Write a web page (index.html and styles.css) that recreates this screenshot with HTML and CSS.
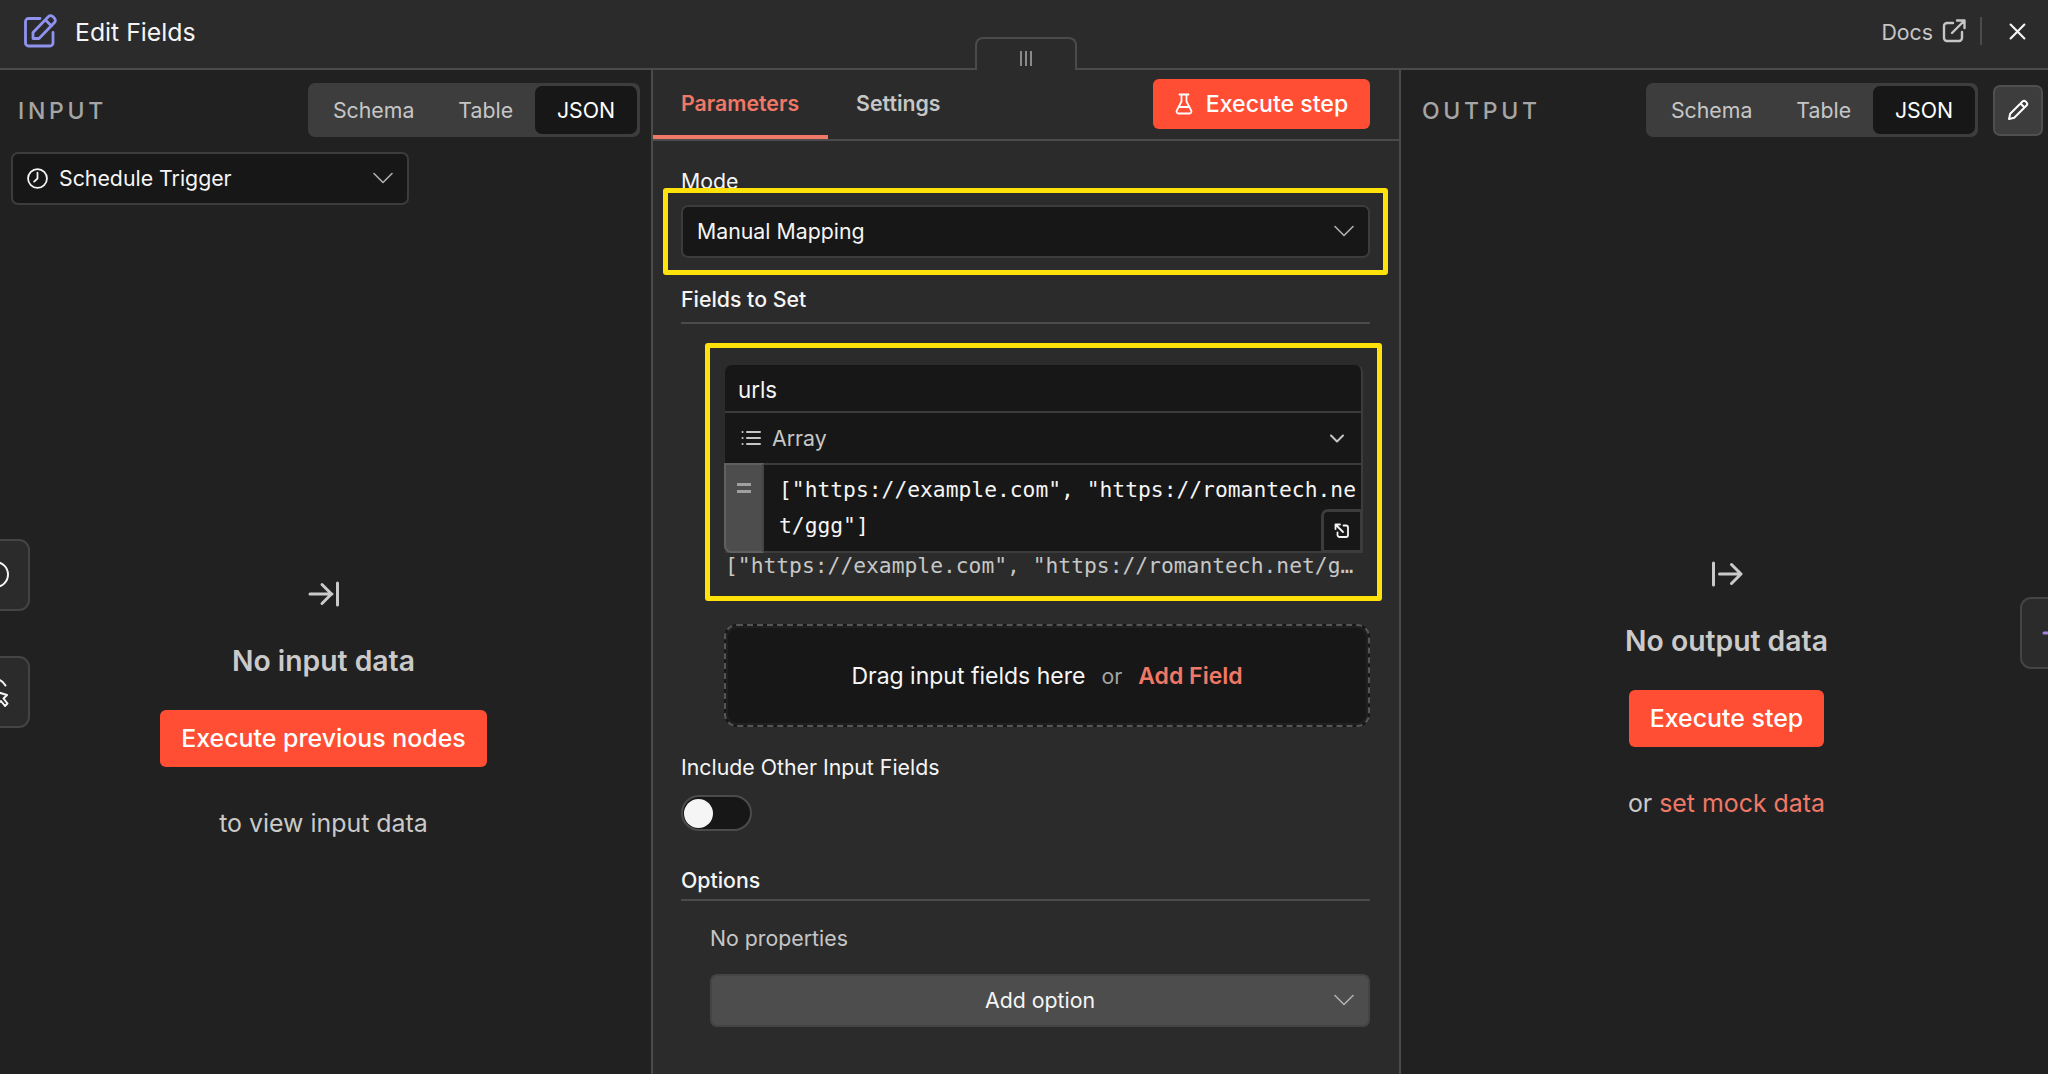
FILE: index.html
```
<!DOCTYPE html>
<html lang="en">
<head>
    <meta charset="UTF-8">
    <meta name="viewport" content="width=device-width, initial-scale=1.0">
    <title>Edit Fields</title>
    <link rel="stylesheet" href="styles.css">
</head>
<body>
    <header class="header">
        <svg class="node-icon" viewBox="0 0 34 34"><path d="M16 4.500H4.500a3 3 0 0 0-3 3V29a3 3 0 0 0 3 3H26a3 3 0 0 0 3-3V18.500"/><path d="M9 24.500v-6L24.500 2.500a3 3 0 0 1 4.200 0l1.800 1.800a3 3 0 0 1 0 4.200L15 24.500zM21.500 6l6 6"/></svg>
        <h1>Edit Fields</h1>
        <a class="docs">Docs
            <svg viewBox="0 0 24 24"><path d="M11 4H5a3 3 0 0 0-3 3v12a3 3 0 0 0 3 3h12a3 3 0 0 0 3-3v-6M15 1.500h7.500V9M22 2L10 14"/></svg>
        </a>
        <span class="divider"></span>
        <svg class="close" viewBox="0 0 16 16"><path d="M1.500 1.500l13 13M14.500 1.500l-13 13"/></svg>
        <div class="drag-handle"><i></i><i></i><i></i></div>
    </header>

    <main class="panels">
        <!-- Input -->
        <section class="panel input-panel">
            <div class="panel-header">
                <span class="panel-title">INPUT</span>
                <div class="radio-group">
                    <button>Schema</button>
                    <button>Table</button>
                    <button class="active">JSON</button>
                </div>
            </div>
            <div class="select trigger-select">
                <svg class="clock" viewBox="0 0 20 20"><circle cx="10" cy="10" r="9"/><path d="M10 4.500V10l-3.200 3"/></svg>
                <span>Schedule Trigger</span>
                <svg class="chevron" viewBox="0 0 20 12"><path d="M1 1.500l9 9 9-9"/></svg>
            </div>
            <div class="empty">
                <svg class="empty-icon" viewBox="0 0 32 26"><path d="M2 13h22M14 3.500l9.500 9.500-9.500 9.500M29.500 2v22"/></svg>
                <h2>No input data</h2>
                <button class="primary">Execute previous nodes</button>
                <p>to view input data</p>
            </div>
            <div class="float-node float-first">
                <svg viewBox="0 0 30 72"><circle cx="-4.500" cy="35.500" r="12.500"/></svg>
            </div>
            <div class="float-node float-second">
                <svg viewBox="0 0 30 72"><path d="M-5 23c4 0 8 2 10.500 6.500M-3 36l10 3-3.500 3.500 4 5-2.500 2.500-4-5-4 3z"/></svg>
            </div>
        </section>

        <!-- Parameters -->
        <section class="params">
            <nav class="tabs">
                <a class="tab active">Parameters</a>
                <a class="tab">Settings</a>
                <button class="primary execute">
                    <svg viewBox="0 0 18 22"><path d="M4.500 1.500h9M6.500 1.500v7L1.800 17.500a2 2 0 0 0 1.800 3h10.800a2 2 0 0 0 1.800-3L11.500 8.500v-7M4 14h10"/></svg>
                    Execute step
                </button>
            </nav>
            <div class="params-body">
                <label>Mode</label>
                <div class="select mode-select">
                    <span>Manual Mapping</span>
                    <svg class="chevron" viewBox="0 0 20 12"><path d="M1 1.500l9 9 9-9"/></svg>
                </div>
                <h3 class="fields-title">Fields to Set</h3>
                <div class="assignment">
                    <div class="name">urls</div>
                    <div class="type">
                        <svg class="list" viewBox="0 0 20 16"><path d="M6 2h13M6 8h13M6 14h13M1.500 2h.1M1.500 8h.1M1.500 14h.1"/></svg>
                        <span>Array</span>
                        <svg class="chevron-small" viewBox="0 0 14 9"><path d="M1 1.500l6 6 6-6"/></svg>
                    </div>
                    <div class="expression">
                        <span class="equals"><i></i><i></i></span>
                        <code>["https://example.com", "https://romantech.net/ggg"]</code>
                        <span class="expand"><svg viewBox="0 0 16 16"><path d="M1.500 6V1.500H6M2 2l7 7M9.500 2.500H12a2 2 0 0 1 2 2V12a2 2 0 0 1-2 2H5.500a2 2 0 0 1-2-2V9.500"/></svg></span>
                    </div>
                </div>
                <code class="result">["https://example.com", "https://romantech.net/g…</code>
                <div class="drop-area">
                    <span>Drag input fields here</span>
                    <span class="or">or</span>
                    <a>Add Field</a>
                </div>
                <label class="include">Include Other Input Fields</label>
                <div class="toggle"></div>
                <h3 class="options-title">Options</h3>
                <p class="no-props">No properties</p>
                <div class="add-option">
                    <span>Add option</span>
                    <svg class="chevron" viewBox="0 0 20 12"><path d="M1 1.500l9 9 9-9"/></svg>
                </div>
            </div>
            <!-- highlight boxes over the form -->
            <div class="highlight highlight-mode"></div>
            <div class="highlight highlight-fields"></div>
        </section>

        <!-- Output -->
        <section class="panel output-panel">
            <div class="panel-header">
                <span class="panel-title">OUTPUT</span>
                <div class="radio-group">
                    <button>Schema</button>
                    <button>Table</button>
                    <button class="active">JSON</button>
                </div>
                <button class="edit">
                    <svg viewBox="0 0 22 22"><path d="M2 20l1.200-5.200L15.500 2.500a2.200 2.200 0 0 1 3.100 0l.9.9a2.200 2.200 0 0 1 0 3.100L7.200 18.800zM13.500 4.500l4 4"/></svg>
                </button>
            </div>
            <div class="empty">
                <svg class="empty-icon" viewBox="0 0 32 26"><path d="M2.500 2v22M8.500 13H30M20.500 3.500L30 13l-9.500 9.500"/></svg>
                <h2>No output data</h2>
                <button class="primary">Execute step</button>
                <p>or <a>set mock data</a></p>
            </div>
            <div class="float-node float-next">
                <svg viewBox="0 0 28 72"><path d="M22 36h12"/></svg>
            </div>
        </section>
    </main>
</body>
</html>
```
FILE: styles.css
```
* {
    box-sizing: border-box;
}
body {
    margin: 0;
    height: 1074px;
    overflow: hidden;
    display: flex;
    flex-direction: column;
    background: #212121;
    color: #f5f5f5;
    font-family: Inter, "Liberation Sans", sans-serif;
    font-size: 21.3px;
    line-height: 24px;
}
h1, h2, h3, p {
    margin: 0;
    font-weight: 400;
}
button {
    font: inherit;
    color: inherit;
    border: none;
    padding: 0;
    background: none;
}
svg {
    fill: none;
    stroke: currentColor;
    stroke-width: 2;
    stroke-linecap: round;
    stroke-linejoin: round;
    flex: none;
}

/* Header */
.header {
    position: relative;
    height: 70px;
    flex: none;
    display: flex;
    align-items: center;
    padding: 0 22px 6px 24px;
    background: #2b2b2b;
    border-bottom: 2px solid #4b4b4b;
}
.node-icon {
    width: 34px;
    height: 34px;
    margin-right: 17px;
    color: #8f92ee;
    stroke-width: 2.8;
}
.header h1 {
    font-size: 24.8px;
    padding-top: 2px;
    margin-right: auto;
}
.docs {
    display: flex;
    align-items: center;
    gap: 9px;
    padding-top: 1px;
    color: #c6c6c6;
}
.docs svg {
    width: 24px;
    height: 24px;
    margin-top: -2px;
    stroke-width: 2.4;
}
.divider {
    width: 2px;
    height: 28px;
    margin: 0 27px 0 14px;
    background: #4b4b4b;
}
.close {
    width: 17px;
    height: 17px;
}
.drag-handle {
    position: absolute;
    left: 975px;
    top: 37px;
    width: 102px;
    height: 33px;
    display: flex;
    justify-content: center;
    gap: 3px;
    padding-top: 12px;
    background: #2b2b2b;
    border: 2px solid #4b4b4b;
    border-bottom: none;
    border-radius: 8px 8px 0 0;
}
.drag-handle i {
    width: 2px;
    height: 15px;
    background: #8a8a8a;
}

/* Panels */
.panels {
    flex: 1;
    display: grid;
    grid-template-columns: 651px 750px 1fr;
}
.panel {
    position: relative;
}
.panel-header {
    display: flex;
    align-items: center;
    height: 80px;
    padding: 0 11px 0 18px;
}
.panel-title {
    padding-top: 1px;
    font-size: 23px;
    font-weight: 500;
    letter-spacing: 3.7px;
    color: #a5a5a5;
    margin-right: auto;
}
.radio-group {
    display: flex;
    width: 332px;
    height: 54px;
    padding: 3px;
    border-radius: 7px;
    background: #3d3d3d;
    color: #c6c6c6;
}
.radio-group button {
    flex: 1 1 auto;
}
.radio-group .active {
    flex: 0 0 102px;
    height: 48px;
    border-radius: 7px;
    background: #171717;
    color: #fff;
}
.select {
    display: flex;
    align-items: center;
    height: 53px;
    border: 2px solid #3c3c3c;
    border-radius: 7px;
    background: #171717;
}
.chevron {
    width: 20px;
    height: 12px;
    margin-left: auto;
    margin-right: 14px;
    color: #b0b0b0;
    stroke-width: 1.6;
}
.trigger-select {
    width: 398px;
    margin: 2px 0 0 11px;
    padding: 0 0 1px 14px;
}
.clock {
    width: 21px;
    height: 21px;
    margin-right: 11px;
    stroke-width: 1.7;
}
.empty {
    display: flex;
    flex-direction: column;
    align-items: center;
    color: #cacaca;
    font-size: 24.9px;
}
.input-panel .empty {
    padding-top: 376px;
    padding-right: 4px;
}
.empty-icon {
    width: 32px;
    height: 26px;
    stroke-width: 3;
}
.empty h2 {
    margin-top: 37px;
    font-size: 28.3px;
    line-height: 34px;
    font-weight: 600;
}
.primary {
    display: flex;
    align-items: center;
    background: #ff4e33;
    color: #fff;
    border-radius: 6px;
    font-weight: 500;
}
.empty .primary {
    height: 57px;
    margin: 32px 0 40px;
    padding: 0 21px 1px;
}
.empty p {
    line-height: 32px;
}
.empty a {
    color: #f07867;
}
.output-panel .empty {
    padding: 411px 0 0 4px;
}
.output-panel .panel-header {
    padding: 0 5px 0 21px;
}
.edit {
    display: flex;
    align-items: center;
    justify-content: center;
    width: 50px;
    height: 51px;
    margin-left: 15px;
    border: 2px solid #4f4f4f;
    border-radius: 7px;
    background: #3d3d3d;
    color: #fff;
}
.edit svg {
    width: 22px;
    height: 22px;
}

/* Neighbouring nodes at the window edges */
.float-node {
    position: absolute;
    width: 30px;
    height: 72px;
    overflow: hidden;
    background: #2b2b2b;
    border: 2px solid #444;
}
.float-node svg {
    display: block;
    width: 30px;
    height: 72px;
    margin-top: -2px;
}
.float-first,
.float-second {
    left: 0;
    border-left: none;
    border-radius: 0 11px 11px 0;
}
.float-first {
    top: 469px;
}
.float-second {
    top: 586px;
}
.float-next {
    right: 0;
    top: 527px;
    width: 28px;
    border-right: none;
    border-radius: 11px 0 0 11px;
    color: #a480e0;
}
.float-next svg {
    width: 28px;
    stroke-width: 3;
}

/* Parameters */
.params {
    position: relative;
    background: #2b2b2b;
    border-left: 2px solid #4b4b4b;
    border-right: 2px solid #4b4b4b;
}
.tabs {
    display: flex;
    height: 71px;
    padding-right: 29px;
    border-bottom: 2px solid #4b4b4b;
}
.tab {
    height: 69px;
    padding: 21px 29px 0 28px;
    font-weight: 600;
    color: #c6c6c6;
}
.tab.active {
    color: #f07867;
    border-bottom: 4px solid #f07867;
}
.execute {
    width: 217px;
    height: 50px;
    margin: 9px 0 0 auto;
    justify-content: center;
    font-size: 23.1px;
}
.execute svg {
    width: 18px;
    height: 22px;
    margin-right: 13px;
    stroke-width: 1.8;
}
.params-body {
    padding: 28px 29px 0 28px;
}
.params-body label {
    display: block;
}
.mode-select {
    margin-top: 12px;
    padding: 0 0 1px 14px;
}
.params-body h3 {
    font-size: 21.3px;
    font-weight: 500;
    border-bottom: 2px solid #4b4b4b;
}
.fields-title {
    margin-top: 29px;
    padding-bottom: 11px;
}
.assignment {
    width: 638px;
    margin: 41px 0 0 44px;
    background: #171717;
    border-right: 2px solid #3c3c3c;
    border-radius: 7px 7px 0 0;
}
.name {
    height: 48px;
    padding: 13px 13px 0;
    font-size: 22.3px;
    border-bottom: 2px solid #3c3c3c;
}
.type {
    display: flex;
    align-items: center;
    height: 52px;
    padding: 0 17px 0 16px;
    color: #c6c6c6;
    border-bottom: 2px solid #3c3c3c;
}
.list {
    width: 20px;
    height: 16px;
    margin-right: 11px;
}
.chevron-small {
    width: 14px;
    height: 9px;
    margin-left: auto;
}
.expression {
    position: relative;
    display: flex;
    height: 88px;
    border-bottom: 2px solid #3c3c3c;
}
.equals {
    width: 40px;
    height: 90px;
    margin: -2px 0 0 -1px;
    flex: none;
    display: flex;
    flex-direction: column;
    align-items: center;
    gap: 4px;
    padding-top: 18px;
    background: #4d4d4d;
    border: 2px solid #606060;
    border-right-color: #444;
    border-radius: 0 0 0 7px;
}
.equals i {
    width: 14px;
    height: 3px;
    background: #a0a0a0;
}
code {
    font-family: "DejaVu Sans Mono", "Liberation Mono", monospace;
    font-size: 21.3px;
}
.expression code {
    width: 582px;
    margin-left: 15px;
    padding-top: 7px;
    line-height: 36px;
    word-break: break-all;
}
.expand {
    position: absolute;
    right: -2px;
    bottom: -2px;
    width: 42px;
    height: 44px;
    display: flex;
    align-items: center;
    justify-content: center;
    background: #171717;
    border: 3px solid #3c3c3c;
    border-radius: 7px 0 0 0;
}
.expand svg {
    width: 16px;
    height: 16px;
    stroke-width: 1.8;
}
.result {
    display: block;
    margin-left: 44px;
    line-height: 26px;
    white-space: nowrap;
    color: #c6c6c6;
}
.drop-area {
    display: flex;
    align-items: center;
    justify-content: center;
    gap: 16px;
    height: 103px;
    margin: 45px 0 0 43px;
    background: #171717;
    border: 2px dashed #555;
    border-radius: 13px;
    box-shadow: inset 0 0 0 2px #202020;
    font-size: 23px;
}
.or {
    color: #a5a5a5;
    font-size: 21.3px;
}
.drop-area a {
    color: #f07867;
    font-weight: 600;
}
.include {
    margin-top: 28px;
}
.toggle {
    width: 71px;
    height: 36px;
    margin-top: 16px;
    padding: 2px 1px;
    background: #171717;
    border: 2px solid #4b4b4b;
    border-radius: 18px;
}
.toggle::before {
    content: "";
    display: block;
    width: 29px;
    height: 29px;
    margin-top: -.5px;
    border-radius: 50%;
    background: #f5f5f5;
}
.options-title {
    margin-top: 37px;
    padding-bottom: 7px;
}
.no-props {
    margin: 25px 0 0 29px;
    color: #c6c6c6;
}
.add-option {
    display: flex;
    align-items: center;
    height: 53px;
    margin: 24px 0 0 29px;
    padding-bottom: 1px;
    background: #4d4d4d;
    border: 2px solid #444;
    border-radius: 7px;
}
.add-option span {
    flex: 1;
    padding-left: 34px;
    text-align: center;
}

.highlight {
    position: absolute;
    border: 5px solid #ffe20a;
    border-radius: 3px;
}
.highlight-mode {
    left: 10px;
    top: 118px;
    width: 725px;
    height: 87px;
}
.highlight-fields {
    left: 52px;
    top: 273px;
    width: 677px;
    height: 258px;
}
```
